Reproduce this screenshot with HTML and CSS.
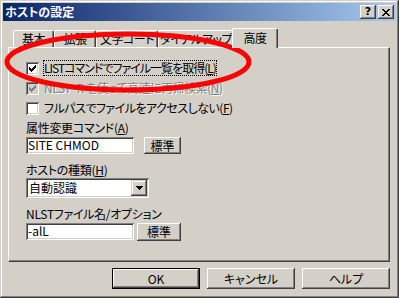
FILE: index.html
```html
<!DOCTYPE html>
<html lang="ja">
<head>
    <meta charset="UTF-8">
    <meta name="viewport" content="width=device-width, initial-scale=1.0">
    <title>ホストの設定</title>
    <link rel="stylesheet" href="styles.css">
</head>
<body>
    <div class="window">
        <div class="titlebar">
            <span class="title">ホストの設定</span>
            <span class="caption-buttons">
                <span class="cap-btn">?</span>
                <span class="cap-btn">
                    <svg width="8" height="7" viewBox="0 0 8 7"><path d="M0 0h2v1h1v1h2v-1h1v-1h2v1h-1v1h-1v1h-1v1h1v1h1v1h1v1h-2v-1h-1v-1h-2v1h-1v1h-2v-1h1v-1h1v-1h1v-1h-1v-1h-1v-1h-1z" fill="#000"/></svg>
                </span>
            </span>
        </div>

        <div class="client">
            <div class="tabs">
                <div class="tab tab-basic">基本</div>
                <div class="tab tab-ext">拡張</div>
                <div class="tab tab-charset">文字コード</div>
                <div class="tab tab-dialup">ダイアルアップ</div>
                <div class="tab active">高度</div>
            </div>

            <div class="panel">
                <div class="check">
                    <span class="box"><svg width="7" height="7" viewBox="0 0 7 7"><path d="M0 2h1v1h1v1h1v-1h1v-1h1v-1h1v-1h1v3h-1v1h-1v1h-1v1h-1v1h-1v-1h-1v-1h-1z" fill="#000"/></svg></span>
                    <span class="caption focus">LISTコマンドでファイル一覧を取得(<u>L</u>)</span>
                </div>
                <div class="check disabled">
                    <span class="box"><svg width="7" height="7" viewBox="0 0 7 7"><path d="M0 2h1v1h1v1h1v-1h1v-1h1v-1h1v-1h1v3h-1v1h-1v1h-1v1h-1v1h-1v-1h-1v-1h-1z" fill="#808080"/></svg></span>
                    <span class="caption">NLST -R を使って高速に再帰検索(<u>N</u>)</span>
                </div>
                <div class="check">
                    <span class="box"></span>
                    <span class="caption">フルパスでファイルをアクセスしない(<u>F</u>)</span>
                </div>

                <div class="label first">属性変更コマンド(<u>A</u>)</div>
                <div class="field-row">
                    <span class="field">SITE CHMOD</span>
                    <span class="btn small wide-gap">標準</span>
                </div>

                <div class="label">ホストの種類(<u>H</u>)</div>
                <div class="select">
                    <span class="select-text">自動認識</span>
                    <span class="drop"><svg width="7" height="4" viewBox="0 0 7 4"><path d="M0 0h7v1h-1v1h-1v1h-1v1h-1v-1h-1v-1h-1v-1h-1z" fill="#000"/></svg></span>
                </div>

                <div class="label last">NLSTファイル名/オプション</div>
                <div class="field-row">
                    <span class="field">-alL</span>
                    <span class="btn small">標準</span>
                </div>
            </div>

            <div class="actions">
                <span class="btn default">OK</span>
                <span class="btn">キャンセル</span>
                <span class="btn">ヘルプ</span>
            </div>
        </div>

        <!-- red marker drawn over the dialog -->
        <svg class="marker" width="399" height="298" viewBox="0 0 399 298">
            <ellipse cx="128" cy="62" rx="121" ry="28" fill="none" stroke="#ff0000" stroke-width="5"/>
        </svg>
    </div>
</body>
</html>
```

FILE: styles.css
```css
body {
    margin: 0;
    background: #d4d0c8;
}

.window {
    position: relative;
    width: 399px;
    height: 298px;
    box-sizing: border-box;
    padding: 3px;
    display: flex;
    flex-direction: column;
    background: #d4d0c8;
    box-shadow: inset -1px -1px #404040, inset 1px 1px #d4d0c8,
                inset -2px -2px #808080, inset 2px 2px #fff;
    font-family: "Noto Sans CJK JP", sans-serif;
    font-size: 12px;
    line-height: 16px;
    font-feature-settings: "palt" 1;
    color: #000;
}

.titlebar {
    height: 18px;
    display: flex;
    align-items: center;
    justify-content: space-between;
    padding: 0 2px 0 2px;
    background: linear-gradient(to right, #0a246a, #a6caf0);
}

.title {
    color: #fff;
    font-weight: bold;
}

.caption-buttons {
    display: flex;
    gap: 2px;
}

.cap-btn {
    width: 16px;
    height: 14px;
    display: flex;
    align-items: center;
    justify-content: center;
    font-family: "DejaVu Sans", sans-serif;
    font-weight: bold;
    font-size: 11px;
    background: #d4d0c8;
    box-shadow: inset -1px -1px #404040, inset 1px 1px #fff,
                inset -2px -2px #808080;
}

.client {
    flex: 1;
    display: flex;
    flex-direction: column;
    padding: 7px 6px 0 5px;
}

.tabs {
    display: flex;
    align-items: flex-end;
    padding-left: 5px;
    height: 19px;
}

.tab {
    height: 17px;
    box-sizing: border-box;
    border-top: 1px solid #fff;
    border-left: 1px solid #fff;
    border-right: 1px solid #404040;
    box-shadow: inset -1px 0 #808080;
    border-radius: 2px 2px 0 0;
    text-align: center;
    white-space: nowrap;
    line-height: 16px;
    letter-spacing: -0.5px;
}

.tab-basic { width: 41px; }
.tab-ext { width: 42px; }
.tab-charset { width: 62px; }
.tab-dialup { width: 76px; }

.tab.active {
    position: relative;
    z-index: 1;
    width: 46px;
    height: 20px;
    margin: 0 0 -1px -2px;
    background: #d4d0c8;
    line-height: 17px;
}

.panel {
    height: 215px;
    box-sizing: border-box;
    padding: 12px 0 0 17px;
    border-top: 1px solid #fff;
    border-left: 1px solid #fff;
    border-right: 1px solid #404040;
    border-bottom: 1px solid #404040;
    box-shadow: inset -1px -1px #808080;
}

.check {
    display: flex;
    align-items: center;
    height: 16px;
    margin-bottom: 4px;
}

.box {
    width: 13px;
    height: 13px;
    box-sizing: border-box;
    display: flex;
    align-items: center;
    justify-content: center;
    background: #fff;
    box-shadow: inset 1px 1px #808080, inset -1px -1px #fff,
                inset 2px 2px #404040, inset -2px -2px #d4d0c8;
}

.caption {
    margin-left: 4px;
    padding: 0 1px;
    letter-spacing: -0.5px;
}

.caption.focus {
    outline: 1px dotted #000;
    outline-offset: -1px;
    letter-spacing: -1px;
}

.check.disabled .box {
    background: #d4d0c8;
}

.check.disabled .caption {
    color: #808080;
    text-shadow: 1px 1px #fff;
}

.label {
    margin-top: 8px;
    height: 16px;
    letter-spacing: -0.3px;
}

.label.first {
    margin-top: 4px;
}

.label.last {
    margin-top: 8px;
}

.field-row {
    display: flex;
    margin-top: 1px;
}

.field {
    width: 108px;
    height: 17px;
    box-sizing: border-box;
    padding: 0 2px;
    background: #fff;
    line-height: 16px;
    box-shadow: inset 1px 1px #808080, inset -1px -1px #fff,
                inset 2px 2px #404040, inset -2px -2px #d4d0c8;
}

.select {
    width: 123px;
    height: 20px;
    box-sizing: border-box;
    padding: 2px;
    display: flex;
    justify-content: space-between;
    background: #fff;
    box-shadow: inset 1px 1px #808080, inset -1px -1px #fff,
                inset 2px 2px #404040, inset -2px -2px #d4d0c8;
}

.select-text {
    padding-left: 1px;
}

.drop {
    width: 16px;
    height: 16px;
    display: flex;
    align-items: center;
    justify-content: center;
    background: #d4d0c8;
    box-shadow: inset -1px -1px #404040, inset 1px 1px #d4d0c8,
                inset -2px -2px #808080, inset 2px 2px #fff;
}

.btn {
    width: 88px;
    height: 21px;
    box-sizing: border-box;
    display: flex;
    align-items: center;
    justify-content: center;
    background: #d4d0c8;
    box-shadow: inset -1px -1px #404040, inset 1px 1px #fff,
                inset -2px -2px #808080, inset 2px 2px #d4d0c8;
}

.btn.default {
    border: 1px solid #000;
}

.btn.small {
    width: 44px;
    height: 18px;
    margin-left: 3px;
}

.btn.small.wide-gap {
    width: 37px;
    height: 17px;
    margin-left: 10px;
}

.actions {
    display: flex;
    justify-content: flex-end;
    gap: 7px;
    margin-top: 6px;
}

.marker {
    position: absolute;
    left: 0;
    top: 0;
    pointer-events: none;
}
```
